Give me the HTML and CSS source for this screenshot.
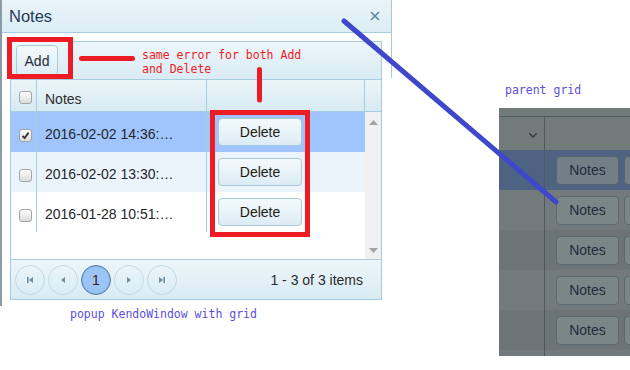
FILE: index.html
```html
<!DOCTYPE html>
<html>
<head>
<meta charset="utf-8">
<link rel="stylesheet" href="styles.css">
</head>
<body>
<div class="stage">
  <section class="window">
    <header class="win-title">
      <span class="win-name">Notes</span>
      <svg class="win-close" width="10" height="10" viewBox="0 0 10 10"><path d="M1 1L9 9M9 1L1 9" stroke="#5f8094" stroke-width="1.5" fill="none"/></svg>
    </header>
    <div class="win-body">
      <div class="grid">
        <div class="toolbar"><button class="k-btn add-btn">Add</button></div>
        <div class="grid-head">
          <div class="hc hc-check"><span class="cb"></span></div>
          <div class="hc hc-notes">Notes</div>
          <div class="hc hc-act"></div>
          <div class="hc hc-scroll"></div>
        </div>
        <div class="grid-content">
          <div class="rows">
            <div class="row selected">
              <div class="c c-check"><span class="cb checked"><svg width="11" height="11" viewBox="0 0 11 11"><path d="M2.5 5.8L4.6 8L8.6 2.6" stroke="#333" stroke-width="1.8" fill="none"/></svg></span></div>
              <div class="c c-notes">2016-02-02 14:36:…</div>
              <div class="c c-act"><button class="k-btn del-btn">Delete</button></div>
            </div>
            <div class="row alt">
              <div class="c c-check"><span class="cb"></span></div>
              <div class="c c-notes">2016-02-02 13:30:…</div>
              <div class="c c-act"><button class="k-btn del-btn">Delete</button></div>
            </div>
            <div class="row">
              <div class="c c-check"><span class="cb"></span></div>
              <div class="c c-notes">2016-01-28 10:51:…</div>
              <div class="c c-act"><button class="k-btn del-btn">Delete</button></div>
            </div>
          </div>
          <div class="scrollbar">
            <svg width="9" height="5" viewBox="0 0 9 5"><path d="M0 5L4.5 0L9 5Z" fill="#a3a3a3"/></svg>
            <svg width="9" height="5" viewBox="0 0 9 5"><path d="M0 0L4.5 5L9 0Z" fill="#a3a3a3"/></svg>
          </div>
        </div>
        <div class="pager">
          <span class="pg"><svg width="10" height="10" viewBox="0 0 10 10"><rect x="2" y="2" width="1.6" height="6" fill="#6f8a9b"/><path d="M8 2L4 5L8 8Z" fill="#6f8a9b"/></svg></span>
          <span class="pg"><svg width="10" height="10" viewBox="0 0 10 10"><path d="M7 2L3 5L7 8Z" fill="#6f8a9b"/></svg></span>
          <span class="pg current">1</span>
          <span class="pg"><svg width="10" height="10" viewBox="0 0 10 10"><path d="M3 2L7 5L3 8Z" fill="#6f8a9b"/></svg></span>
          <span class="pg"><svg width="10" height="10" viewBox="0 0 10 10"><path d="M2 2L6 5L2 8Z" fill="#6f8a9b"/><rect x="6.4" y="2" width="1.6" height="6" fill="#6f8a9b"/></svg></span>
          <span class="pager-info">1 - 3 of 3 items</span>
        </div>
      </div>
    </div>
  </section>

  <div class="parent">
    <div class="p-top"></div>
    <div class="p-head">
      <div class="p-c1"><svg width="8" height="5" viewBox="0 0 8 5"><path d="M0.5 0.5L4 4L7.5 0.5" stroke="#2d3b43" stroke-width="1.4" fill="none"/></svg></div>
      <div class="p-c2"></div>
    </div>
    <div class="p-row p-sel"><div class="p-c1"></div><div class="p-c2"><span class="p-btn">Notes</span><span class="p-btn"></span></div></div>
    <div class="p-row"><div class="p-c1"></div><div class="p-c2"><span class="p-btn">Notes</span><span class="p-btn"></span></div></div>
    <div class="p-row p-alt"><div class="p-c1"></div><div class="p-c2"><span class="p-btn">Notes</span><span class="p-btn"></span></div></div>
    <div class="p-row"><div class="p-c1"></div><div class="p-c2"><span class="p-btn">Notes</span><span class="p-btn"></span></div></div>
    <div class="p-row p-alt"><div class="p-c1"></div><div class="p-c2"><span class="p-btn">Notes</span><span class="p-btn"></span></div></div>
    <div class="p-row"><div class="p-c1"></div><div class="p-c2"><span class="p-btn"></span><span class="p-btn"></span></div></div>
  </div>

  <svg class="annot" width="630" height="370" viewBox="0 0 630 370">
    <rect x="9.5" y="39.5" width="61" height="37" fill="none" stroke="#ed1c24" stroke-width="5"/>
    <rect x="212.5" y="112.5" width="95" height="122" fill="none" stroke="#ed1c24" stroke-width="5"/>
    <line x1="81.5" y1="58.5" x2="132.5" y2="58.5" stroke="#ed1c24" stroke-width="5" stroke-linecap="round"/>
    <line x1="259.5" y1="69.5" x2="259.5" y2="100" stroke="#ed1c24" stroke-width="5" stroke-linecap="round"/>
    <line x1="344" y1="21" x2="556" y2="202" stroke="#3f48cc" stroke-width="5" stroke-linecap="round"/>
  </svg>

  <p class="note note-red">same error for both Add<br>and Delete</p>
  <p class="note note-blue note-popup">popup KendoWindow with grid</p>
  <p class="note note-blue note-parent">parent grid</p>
</div>
</body>
</html>
```

FILE: styles.css
```css
* { box-sizing: border-box; }
html, body { margin: 0; padding: 0; background: #fff; }
body { font-family: "Liberation Sans", Arial, sans-serif; }

.stage {
  position: relative;
  width: 630px;
  height: 370px;
  overflow: hidden;
  background: #fff;
}

/* ---------- Kendo window ---------- */
.window {
  position: absolute;
  left: 0;
  top: 0;
  width: 392px;
  height: 306px;
  border-left: 2px solid #8b9ca7;
  background: #fff;
}
.window::after {
  content: "";
  position: absolute;
  right: 0;
  top: 0;
  width: 1px;
  height: 78px;
  background: #a9c8d7;
}
.win-title {
  height: 33px;
  border-bottom: 1px solid #a8cddc;
  background: linear-gradient(#eaf4f9, #dbedf5);
  display: flex;
  align-items: center;
  justify-content: space-between;
  padding: 0 12px 0 7px;
}
.win-name {
  font-size: 16.5px;
  color: #1f3c58;
}
.win-close { display: block; }

.win-body { padding: 8px 0 0 8px; }

.grid {
  width: 372px;
  border: 1px solid #a3cbdb;
  display: flex;
  flex-direction: column;
}

.toolbar {
  height: 38px;
  border-bottom: 1px solid #a6cddd;
  background: linear-gradient(#edf6fa, #d9ebf4);
  padding: 3px 0 0 5px;
}

.k-btn {
  font-family: "Liberation Sans", Arial, sans-serif;
  font-size: 14px;
  color: #1e2b36;
  border: 1px solid #a7cbdd;
  border-radius: 4px;
  background: linear-gradient(#f4f9fc, #dcecf5);
  padding: 0;
  margin: 0;
}
.add-btn { width: 42px; height: 31px; }
.del-btn { width: 84px; height: 28px; color: #231c14; }

.grid-head {
  display: flex;
  height: 32px;
  border-bottom: 1px solid #a6cddd;
  background: linear-gradient(#ebf5f9, #d8eaf3);
}
.hc {
  display: flex;
  align-items: center;
  padding-top: 3px;
  font-size: 14px;
  color: #2d2d2d;
}
.hc-check { width: 26px; border-right: 1px solid #a6cddd; padding-left: 8px; }
.hc-notes { width: 170px; border-right: 1px solid #a6cddd; padding-left: 8px; padding-top: 6px; }
.hc-act { width: 158px; border-right: 1px solid #a6cddd; }
.hc-scroll { width: 16px; }

.cb {
  width: 13px;
  height: 13px;
  border: 1px solid #a4a4a4;
  border-radius: 3px;
  background: linear-gradient(#fdfdfd, #dcdcdc);
  display: flex;
  align-items: center;
  justify-content: center;
}
.cb svg { display: block; }

.grid-content {
  display: flex;
  height: 147px;
}
.rows { width: 354px; }
.row { display: flex; height: 40px; background: #fff; }
.row.selected { background: #9fc5fc; }
.row.alt { background: #ebf4fa; }
.c {
  display: flex;
  align-items: center;
  font-size: 14px;
  color: #1f262c;
}
.c-check { width: 26px; border-right: 1px solid #a9cfde; padding: 6px 0 0 8px; }
.c-notes { width: 170px; border-right: 1px solid #a9cfde; padding: 3px 0 0 8px; white-space: nowrap; }
.c-act { width: 158px; padding-left: 11px; }

.scrollbar {
  width: 16px;
  background: #f0f0f0;
  display: flex;
  flex-direction: column;
  align-items: center;
  justify-content: space-between;
  padding: 8px 0 6px 0;
}
.scrollbar svg { display: block; }

.pager {
  height: 40px;
  border-top: 1px solid #a6cddd;
  background: linear-gradient(#edf6fa, #d9ebf4);
  display: flex;
  align-items: center;
  gap: 3px;
  padding: 0 18px 0 4px;
}
.pg {
  width: 30px;
  height: 30px;
  border: 1px solid #bfdae5;
  border-radius: 50%;
  display: flex;
  align-items: center;
  justify-content: center;
  font-size: 14px;
}
.pg svg { display: block; }
.pg.current {
  background: #9dc4f6;
  border-color: #4f80aa;
  color: #3a1a1a;
  box-shadow: inset 0 0 2px rgba(40, 80, 120, 0.4);
}
.pager-info {
  margin-left: auto;
  font-size: 14px;
  color: #2b2b2b;
}

/* ---------- parent grid (dimmed) ---------- */
.parent {
  position: absolute;
  left: 499px;
  top: 108px;
  width: 131px;
  height: 248px;
  background: #737a7a;
  overflow: hidden;
}
.p-top { height: 9px; border-bottom: 1px solid #4b5a61; }
.p-head { display: flex; height: 33px; }
.p-c1 {
  width: 46px;
  border-right: 1px solid #4b5a61;
  display: flex;
  align-items: center;
  justify-content: flex-end;
  padding: 4px 7px 0 0;
  flex: 0 0 46px;
}
.p-c1 svg { display: block; }
.p-c2 {
  flex: 1;
  display: flex;
  align-items: center;
  gap: 5px;
  padding-left: 11px;
}
.p-row { display: flex; height: 40px; background: #737a7b; }
.p-row.p-alt { background: #6d7475; }
.p-row.p-sel { background: #4e6281; }
.p-btn {
  flex: 0 0 63px;
  height: 29px;
  border: 1px solid #5b6a70;
  border-radius: 4px;
  background: #7b8687;
  display: flex;
  align-items: center;
  justify-content: center;
  font-size: 14px;
  color: #1c2d3e;
}
.p-sel .p-btn { background: #737f87; border-color: #55656e; }

/* ---------- annotations ---------- */
.annot {
  position: absolute;
  left: 0;
  top: 0;
  pointer-events: none;
}
.note {
  position: absolute;
  margin: 0;
  font-family: "DejaVu Sans Mono", "Liberation Mono", monospace;
  font-size: 11.5px;
  line-height: 14px;
  white-space: nowrap;
}
.note-red { left: 142px; top: 48px; color: #ed1c24; }
.note-blue { color: #5a50dc; }
.note-popup { left: 70px; top: 307px; }
.note-parent { left: 505px; top: 83px; }
```
